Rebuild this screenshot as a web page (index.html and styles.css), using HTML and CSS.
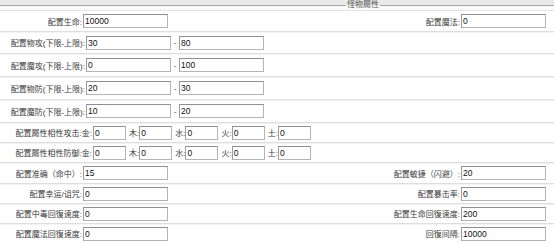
FILE: index.html
```html
<!DOCTYPE html>
<html lang="zh-CN">
<head>
    <meta charset="UTF-8">
    <title>怪物属性</title>
    <link rel="stylesheet" href="styles.css">
</head>
<body>
    <div class="panel">
        <div class="legend">
            <span class="legend-line"></span>
            <span class="legend-title">怪物屬性</span>
            <span class="legend-line legend-line-end"></span>
        </div>

        <!-- 基本 -->
        <div class="row row-first">
            <div class="half">
                <label class="label">配置生命:</label><input class="field" value="10000">
            </div>
            <div class="half half-right">
                <label class="label-right">配置魔法:</label><input class="field" value="0">
            </div>
        </div>

        <!-- 上下限 -->
        <div class="row row-range">
            <div class="half">
                <label class="label label-wide">配置物攻(下限-上限):</label><input class="field" value="30"><span class="dash">-</span><input class="field" value="80">
            </div>
        </div>
        <div class="row row-range row-tall">
            <div class="half">
                <label class="label label-wide">配置魔攻(下限-上限):</label><input class="field" value="0"><span class="dash">-</span><input class="field" value="100">
            </div>
        </div>
        <div class="row row-range row-tall">
            <div class="half">
                <label class="label label-wide">配置物防(下限-上限):</label><input class="field" value="20"><span class="dash">-</span><input class="field" value="30">
            </div>
        </div>
        <div class="row row-range row-tall">
            <div class="half">
                <label class="label label-wide">配置魔防(下限-上限):</label><input class="field" value="10"><span class="dash">-</span><input class="field" value="20">
            </div>
        </div>

        <!-- 属性相性 -->
        <div class="row">
            <div class="half">
                <label class="label label-element">配置屬性相性攻击:金:</label><input class="field field-small" value="0">
                <label class="element">木:</label><input class="field field-small" value="0">
                <label class="element">水:</label><input class="field field-small" value="0">
                <label class="element">火:</label><input class="field field-small" value="0">
                <label class="element">土:</label><input class="field field-small" value="0">
            </div>
        </div>
        <div class="row">
            <div class="half">
                <label class="label label-element">配置屬性相性防御:金:</label><input class="field field-small" value="0">
                <label class="element">木:</label><input class="field field-small" value="0">
                <label class="element">水:</label><input class="field field-small" value="0">
                <label class="element">火:</label><input class="field field-small" value="0">
                <label class="element">土:</label><input class="field field-small" value="0">
            </div>
        </div>

        <!-- 其它 -->
        <div class="row row-mid">
            <div class="half">
                <label class="label">配置准确（命中）:</label><input class="field" value="15">
            </div>
            <div class="half half-right">
                <label class="label-right">配置敏捷（闪避）:</label><input class="field" value="20">
            </div>
        </div>
        <div class="row">
            <div class="half">
                <label class="label">配置幸运/诅咒:</label><input class="field" value="0">
            </div>
            <div class="half half-right">
                <label class="label-right">配置暴击率:</label><input class="field" value="0">
            </div>
        </div>
        <div class="row">
            <div class="half">
                <label class="label">配置中毒回復速度:</label><input class="field" value="0">
            </div>
            <div class="half half-right">
                <label class="label-right">配置生命回復速度:</label><input class="field" value="200">
            </div>
        </div>
        <div class="row">
            <div class="half">
                <label class="label">配置魔法回復速度:</label><input class="field" value="0">
            </div>
            <div class="half half-right">
                <label class="label-right">回復间隔:</label><input class="field" value="10000">
            </div>
        </div>
    </div>
</body>
</html>
```

FILE: styles.css
```css
body {
    margin: 0;
    background-color: #fff;
    font-family: 'Liberation Sans', 'Noto Sans CJK SC', sans-serif;
    font-size: 8px;
    color: #3a3a3a;
}

.panel {
    width: 554px;
}

/* Fieldset style title */
.legend {
    display: flex;
    align-items: center;
    height: 10px;
    background: linear-gradient(#e9e9e9 0, #e9e9e9 5px, #fafafa 5px);
    border-bottom: 1px solid #e4e4e4;
}

.legend-line {
    flex: 1;
    height: 1px;
    background-color: #a5a5a5;
}

.legend-line-end {
    flex: 0 0 174px;
}

.legend-title {
    padding: 0 1px;
    line-height: 10px;
    color: #555;
}

.row {
    display: flex;
    align-items: center;
    height: 19px;
    border-bottom: 1px solid #dedede;
    box-shadow: 0 1px 0 #f3f3f3;
}

.row-first {
    height: 20px;
}

.row-mid {
    height: 20px;
}

.row-range {
    height: 21px;
}

.row-tall {
    height: 22px;
}

.half {
    display: flex;
    align-items: center;
    width: 277px;
    white-space: nowrap;
}

.half-right {
    flex: 1;
    justify-content: flex-end;
    padding-right: 8px;
}

.label {
    flex-shrink: 0;
    width: 82px;
    margin-right: 1px;
    text-align: right;
}

.label-wide {
    width: 85px;
}

.label-element {
    width: 92px;
}

.label-right {
    margin-right: 1px;
}

.element {
    margin-left: 3px;
    margin-right: 0;
}

.field {
    box-sizing: border-box;
    width: 85px;
    height: 14px;
    margin: 0;
    padding: 0 1px;
    border: 1px solid #b4b4b4;
    border-top-color: #8f8f8f;
    border-left-color: #9c9c9c;
    font-family: 'Liberation Sans', sans-serif;
    font-size: 8.5px;
    color: #111;
    background-color: #fff;
    outline: none;
}

.field-small {
    width: 33px;
}

.dash {
    width: 8px;
    text-align: center;
}
```
